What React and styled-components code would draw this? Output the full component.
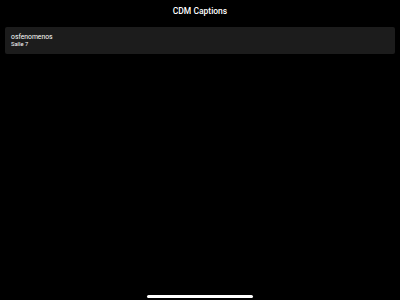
import React from 'react';
import styled, { createGlobalStyle } from 'styled-components';

const Global = createGlobalStyle`
  html, body { margin: 0; padding: 0; background: #000; }
  body { font-family: Roboto, "Liberation Sans", sans-serif; color: #fff; }
`;

const Screen = styled.div`
  width: 400px;
  height: 300px;
  background: #000;
  display: flex;
  flex-direction: column;
  position: relative;
  overflow: hidden;
`;

const Header = styled.div`
  height: 22px;
  display: flex;
  align-items: center;
  justify-content: center;
`;

const Title = styled.h1`
  margin: 0;
  font-size: 8.5px;
  font-weight: 500;
  color: #fff;
`;

const List = styled.div`
  padding: 5px 5px 0;
  display: flex;
  flex-direction: column;
  gap: 4px;
`;

const Card = styled.div`
  background: #1c1c1c;
  border-radius: 2px;
  height: 27px;
  padding: 0 6px;
  display: flex;
  flex-direction: column;
  justify-content: center;
`;

const Name = styled.div`
  font-size: 6.8px;
  line-height: 8px;
  color: #fff;
`;

const Room = styled.div`
  font-size: 5.8px;
  line-height: 7px;
  color: #fff;
`;

const HomeBar = styled.div`
  position: absolute;
  bottom: 2px;
  left: 147px;
  width: 106px;
  height: 3px;
  border-radius: 2px;
  background: #fff;
`;

const sessions = [{ name: 'osfenomenos', room: 'Salle 7' }];

export default function App() {
  return (
    <>
      <Global />
      <Screen>
        <Header>
          <Title>CDM Captions</Title>
        </Header>
        <List>
          {sessions.map((s) => (
            <Card key={s.name}>
              <Name>{s.name}</Name>
              <Room>{s.room}</Room>
            </Card>
          ))}
        </List>
        <HomeBar />
      </Screen>
    </>
  );
}
